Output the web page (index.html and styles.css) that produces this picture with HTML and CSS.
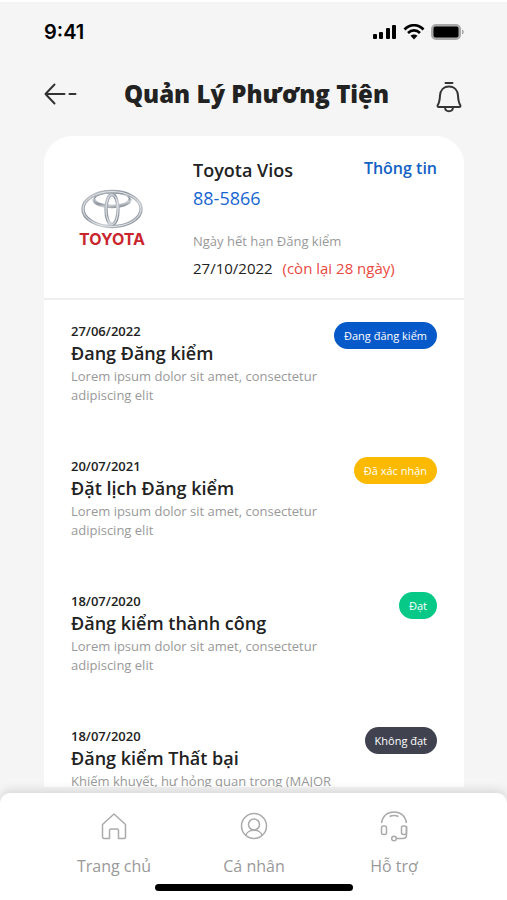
FILE: index.html
```html
<!DOCTYPE html>
<html lang="vi">
  <head>
    <meta charset="UTF-8" />
    <meta name="viewport" content="width=device-width, initial-scale=1.0" />
    <title>Quản Lý Phương Tiện</title>
    <link rel="stylesheet" href="styles.css">
  </head>
  <body>
    <div class="status-bar">
      <span class="status-time">9:41</span>
      <div class="status-icons">
        <svg width="24" height="16" viewBox="0 0 24 16">
          <rect x="0" y="10" width="4" height="5" rx="1" />
          <rect x="6" y="8" width="4" height="7" rx="1" />
          <rect x="13" y="4" width="4" height="11" rx="1" />
          <rect x="19" y="1" width="4" height="14" rx="1" />
        </svg>
        <svg width="22" height="16" viewBox="0 0 22 16">
          <path d="M1.5 5.5C7-.2 15-.2 20.500 5.500M5 9c3.500-3.400 8.500-3.400 12 0" fill="none" stroke="#000" stroke-width="2.700" />
          <path d="M7.500 11.800c2-1.800 5-1.800 7 0L11 15.500z" />
        </svg>
        <svg width="34" height="16" viewBox="0 0 34 16">
          <rect x="1" y="1" width="28" height="14" rx="4" fill="#aaa" stroke="#a8a8a8" stroke-width="2" />
          <rect x="2.500" y="2.500" width="25" height="11" rx="2" />
          <path d="M31 5.500c2.400.8 2.400 4.200 0 5z" fill="#aaa" />
        </svg>
      </div>
    </div>

    <header class="header">
      <button class="icon-button" aria-label="Quay lại">
        <svg width="33" height="22" viewBox="0 0 33 22" class="line-icon">
          <path d="M10.500 1.500L1.500 11l9 9.500M2 11h18.500M25.500 11h6" />
        </svg>
      </button>
      <h1>Quản Lý Phương Tiện</h1>
      <button class="icon-button bell-button" aria-label="Thông báo">
        <svg width="26" height="32" viewBox="0 0 26 32" class="line-icon">
          <path d="M9.500 2h7M13 5.500c-5.500 0-8.700 4-9 9-.3 6-.9 7.500-2.200 9.500-.6 1-.2 2 1 2h20.400c1.200 0 1.600-1 1-2-1.300-2-1.900-3.500-2.200-9.500-.3-5-3.500-9-9-9zM9 26.500c.5 5 7.500 5 8 0" />
        </svg>
      </button>
    </header>

    <main class="card">
      <section class="vehicle">
        <svg class="vehicle-logo" width="70" height="64" viewBox="0 0 70 64" role="img" aria-label="Toyota">
          <defs>
            <linearGradient id="chrome" x1="0" y1="0" x2="1" y2="1">
              <stop offset="0" stop-color="#c5c9ce" />
              <stop offset="0.400" stop-color="#8d959f" />
              <stop offset="0.650" stop-color="#c9cdd2" />
              <stop offset="1" stop-color="#747d88" />
            </linearGradient>
          </defs>
          <g fill="none" stroke="url(#chrome)">
            <ellipse cx="35" cy="20" rx="29" ry="17.500" stroke-width="3.500" />
            <path d="M17 10c0 10 36 10 36 0" stroke-width="3.500" />
            <path d="M17 10c2-5 9-6 18-6s16 1 18 6" stroke-width="1.500" />
            <ellipse cx="35" cy="20.500" rx="6" ry="15" stroke-width="3.500" />
          </g>
          <ellipse cx="35" cy="20" rx="29" ry="17.500" fill="none" stroke="#e3e6e9" stroke-width="1" />
          <ellipse cx="35" cy="20.500" rx="6" ry="15" fill="none" stroke="#e3e6e9" stroke-width="1" />
          <text x="35" y="56" class="logo-text">TOYOTA</text>
        </svg>
        <div class="vehicle-info">
          <div class="vehicle-heading">
            <h2>Toyota Vios</h2>
            <a href="#" class="info-link">Thông tin</a>
          </div>
          <div class="plate">88-5866</div>
          <div class="expiry-label">Ngày hết hạn Đăng kiểm</div>
          <div class="expiry-date">27/10/2022 <span class="remaining">(còn lại 28 ngày)</span></div>
        </div>
      </section>

      <ul class="history">
        <li class="history-item">
          <div class="history-body">
            <div class="history-date">27/06/2022</div>
            <h3>Đang Đăng kiểm</h3>
            <p>Lorem ipsum dolor sit amet, consectetur adipiscing elit</p>
          </div>
          <span class="badge badge-active">Đang đăng kiểm</span>
        </li>
        <li class="history-item">
          <div class="history-body">
            <div class="history-date">20/07/2021</div>
            <h3>Đặt lịch Đăng kiểm</h3>
            <p>Lorem ipsum dolor sit amet, consectetur adipiscing elit</p>
          </div>
          <span class="badge badge-confirmed">Đã xác nhận</span>
        </li>
        <li class="history-item">
          <div class="history-body">
            <div class="history-date">18/07/2020</div>
            <h3>Đăng kiểm thành công</h3>
            <p>Lorem ipsum dolor sit amet, consectetur adipiscing elit</p>
          </div>
          <span class="badge badge-passed">Đạt</span>
        </li>
        <li class="history-item">
          <div class="history-body">
            <div class="history-date">18/07/2020</div>
            <h3>Đăng kiểm Thất bại</h3>
            <p>Khiếm khuyết, hư hỏng quan trọng (MAJOR</p>
          </div>
          <span class="badge badge-failed">Không đạt</span>
        </li>
      </ul>
    </main>

    <nav class="tab-bar">
      <div class="tabs">
        <a href="#" class="tab">
          <svg width="30" height="32" viewBox="0 0 30 32">
            <path d="M15 4L3.500 14.500v12.500q0 1.500 1.500 1.500h5.500v-8q0-1.500 1.500-1.500h6q1.500 0 1.500 1.500v8h5.500q1.500 0 1.500-1.500v-12.500z" />
          </svg>
          Trang chủ
        </a>
        <a href="#" class="tab">
          <svg width="30" height="32" viewBox="0 0 30 32">
            <circle cx="15" cy="16" r="12.500" />
            <circle cx="15" cy="14.500" r="5.500" />
            <path d="M7 25.500c1-7 15-7 16 0" />
          </svg>
          Cá nhân
        </a>
        <a href="#" class="tab">
          <svg width="30" height="32" viewBox="0 0 30 32">
            <path d="M2.500 13C4 5 9 2 15 2s11 3 12.500 11M10.500 6.500c3-1.300 6-1.300 9 0M27.500 16v9q0 3.500-4 3.500h-6" />
            <rect x="2.500" y="16" width="5" height="8.500" rx="2" />
            <rect x="22.500" y="16" width="5" height="8.500" rx="2" />
            <circle cx="15" cy="28.500" r="2.300" />
          </svg>
          Hỗ trợ
        </a>
      </div>
      <div class="home-indicator"></div>
    </nav>
  </body>
</html>
```
FILE: styles.css
```css
* {
  box-sizing: border-box;
}
body {
  font-family: "Open Sans", "Noto Sans", sans-serif;
  background-color: #f5f5f5;
  color: #222;
  display: flex;
  flex-direction: column;
  height: 100vh;
  margin: 0;
  border-top: 2px solid #fff;
  overflow: hidden;
}
h1,
h2,
h3,
p {
  margin: 0;
}
a {
  text-decoration: none;
}
.status-bar {
  display: flex;
  justify-content: space-between;
  align-items: center;
  padding: 18px 42px 0 44px;
  height: 42px;
}
.status-time {
  font-family: Inter, sans-serif;
  font-size: 20px;
  font-weight: 600;
  color: #000;
}
.status-icons {
  display: flex;
  align-items: center;
  gap: 6px;
}
.header {
  display: flex;
  justify-content: space-between;
  align-items: center;
  padding: 12px 45px 4px 44px;
  height: 92px;
  flex-shrink: 0;
}
.header h1 {
  font-size: 24px;
  font-weight: 800;
  line-height: 32px;
}
.icon-button {
  display: flex;
  background: none;
  border: none;
  padding: 0;
  cursor: pointer;
}
.bell-button {
  padding-top: 6px;
}
.line-icon {
  fill: none;
  stroke: #333;
  stroke-width: 2;
  stroke-linecap: round;
  stroke-linejoin: round;
}
.card {
  flex: 1;
  min-height: 0;
  margin: 0 43px 6px 44px;
  background-color: #fff;
  border-radius: 28px 28px 0 0;
  overflow: hidden;
}
.vehicle {
  display: flex;
  gap: 46px;
  padding: 20px 27px 16px 33px;
  border-bottom: 2px solid #eee;
}
.vehicle-logo {
  flex-shrink: 0;
  margin-top: 33px;
}
.logo-text {
  font-family: Inter, sans-serif;
  font-size: 16px;
  font-weight: 700;
  fill: #c9252d;
  text-anchor: middle;
}
.vehicle-info {
  flex: 1;
}
.vehicle-heading {
  display: flex;
  justify-content: space-between;
  align-items: flex-start;
}
.vehicle h2 {
  font-size: 18px;
  font-weight: 600;
  line-height: 28px;
}
.info-link {
  font-size: 16px;
  font-weight: 600;
  line-height: 24px;
  color: #1261c4;
}
.plate {
  font-size: 18px;
  line-height: 28px;
  color: #1766d1;
}
.expiry-label {
  margin-top: 16px;
  font-size: 13px;
  line-height: 26px;
  color: #999;
}
.expiry-date {
  font-size: 15px;
  line-height: 28px;
}
.remaining {
  margin-left: 6px;
  color: #e9493f;
}
.history {
  display: flex;
  flex-direction: column;
  gap: 52px;
  list-style: none;
  margin: 0;
  padding: 22px 27px;
}
.history-item {
  display: flex;
  justify-content: space-between;
  align-items: flex-start;
}
.history-body {
  width: 272px;
}
.history-date {
  font-size: 13px;
  font-weight: 600;
  line-height: 18px;
}
.history h3 {
  font-size: 18px;
  font-weight: 600;
  line-height: 27px;
}
.history p {
  font-size: 13px;
  line-height: 19px;
  color: #999;
}
.badge {
  border-radius: 14px;
  padding: 0 10px;
  font-size: 11px;
  line-height: 27px;
  white-space: nowrap;
  color: #fff;
}
.badge-active {
  background-color: #0559c9;
}
.badge-confirmed {
  background-color: #fbb900;
}
.badge-passed {
  background-color: #06c988;
}
.badge-failed {
  background-color: #40424f;
}
.tab-bar {
  position: relative;
  flex-shrink: 0;
  padding: 17px 43px 9px 44px;
  background-color: #fff;
  border-radius: 10px 10px 0 0;
  box-shadow: 0 -3px 10px rgba(0, 0, 0, 0.12);
}
.tabs {
  display: grid;
  grid-template-columns: repeat(3, 1fr);
}
.tab {
  display: flex;
  flex-direction: column;
  align-items: center;
  gap: 12px;
  font-size: 16px;
  line-height: 24px;
  color: #999;
}
.tab svg {
  fill: none;
  stroke: #aaa;
  stroke-width: 1.5;
  stroke-linejoin: round;
}
.home-indicator {
  width: 198px;
  height: 7px;
  margin: 6px auto 0;
  border-radius: 4px;
  background-color: #000;
}
```
